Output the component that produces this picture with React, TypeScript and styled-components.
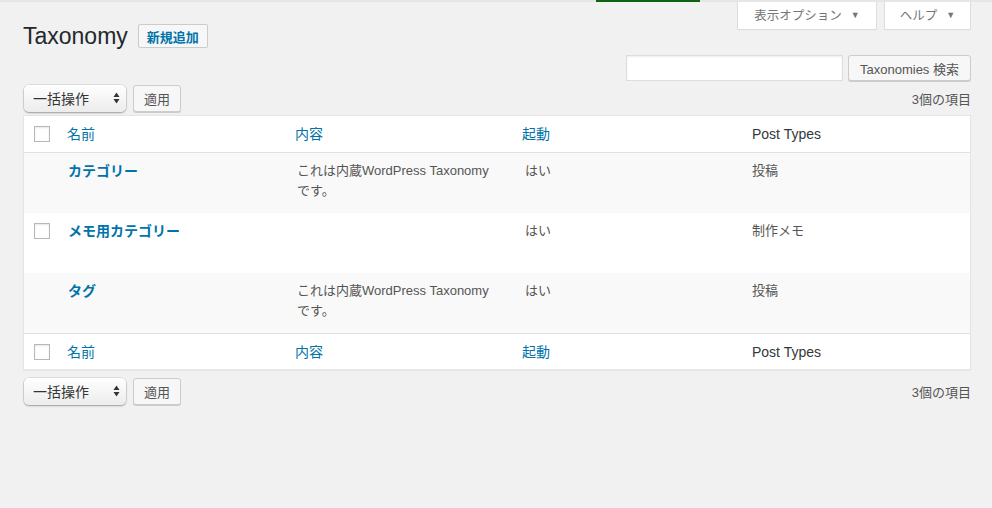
import styled, { createGlobalStyle } from "styled-components";

const GlobalStyle = createGlobalStyle`
  html, body {
    margin: 0;
    padding: 0;
    background: #f1f1f1;
    font-family: "Liberation Sans", "Noto Sans CJK JP", sans-serif;
    font-size: 13px;
    color: #555;
  }
`

const TopStrip = styled.div`
  position: fixed;
  top: 0;
  left: 0;
  right: 0;
  height: 2px;
  display: flex;
  background: #e6e6e6;
`

const Progress = styled.span`
  margin-left: 596px;
  width: 104px;
  background: #0b640f;
`

const Page = styled.div`
  padding: 0 21px 40px 23px;
  min-height: 100vh;
  box-sizing: border-box;
`

const TopBar = styled.div`
  display: flex;
  justify-content: space-between;
  align-items: flex-start;
  height: 50px;
`

const TitleWrap = styled.div`
  display: flex;
  align-items: center;
  gap: 10px;
  margin-top: 24px;
`

const Title = styled.h1`
  margin: 0;
  font-size: 23px;
  font-weight: 400;
  line-height: 24px;
  color: #23282d;
`

const AddNew = styled.button`
  height: 24px;
  padding: 0 8px;
  border: 1px solid #ccc;
  border-radius: 2px;
  background: #f7f7f7;
  color: #0073aa;
  font-family: inherit;
  font-size: 13px;
  font-weight: 700;
`

const MetaTabs = styled.div`
  display: flex;
  gap: 7px;
`

const MetaTab = styled.button<{ $w: number }>`
  width: ${p => p.$w}px;
  height: 30px;
  background: #fff;
  border: 1px solid #ddd;
  border-top: none;
  box-shadow: 0 1px 1px -1px rgba(0, 0, 0, 0.1);
  color: #72777c;
  font-family: inherit;
  font-size: 12.5px;
  display: flex;
  align-items: center;
  justify-content: center;
  gap: 9px;
`

const Caret = styled.span`
  font-size: 9px;
  color: #72777c;
`

const SearchRow = styled.div`
  display: flex;
  justify-content: flex-end;
  gap: 5px;
  margin-top: 5px;
  height: 26px;
`

const SearchInput = styled.input`
  width: 217px;
  height: 26px;
  box-sizing: border-box;
  border: 1px solid #ddd;
  box-shadow: inset 0 1px 2px rgba(0, 0, 0, 0.07);
  background: #fff;
  margin: 0;
`

const Button = styled.button<{ $w?: number; $h?: number }>`
  width: ${p => (p.$w ? `${p.$w}px` : "auto")};
  height: ${p => p.$h ?? 26}px;
  box-sizing: border-box;
  padding: 0 8px;
  background: #f7f7f7;
  border: 1px solid #ccc;
  border-radius: 3px;
  box-shadow: 0 1px 0 #ccc;
  color: #555;
  font-family: inherit;
  font-size: 13px;
  margin: 0;
`

const TableNav = styled.div<{ $top: number; $bottom: number }>`
  display: flex;
  justify-content: space-between;
  align-items: center;
  margin: ${p => p.$top}px 0 ${p => p.$bottom}px;
  height: 28px;
`

const Actions = styled.div`
  display: flex;
  align-items: center;
  gap: 7px;
  padding-left: 1px;
`

const Select = styled.div`
  width: 102px;
  height: 27px;
  box-sizing: border-box;
  display: flex;
  align-items: center;
  justify-content: space-between;
  padding: 0 6px 0 9px;
  border-radius: 5px;
  background: linear-gradient(#ffffff, #ececec);
  box-shadow: 0 0 0 0.5px rgba(0, 0, 0, 0.15), 0 1px 2px rgba(0, 0, 0, 0.3);
  font-size: 14px;
  color: #333;
`

const Count = styled.span`
  font-size: 13px;
  color: #555;
`

const Table = styled.table`
  width: 100%;
  border-spacing: 0;
  border: 1px solid #e5e5e5;
  background: #fff;
  box-shadow: 0 1px 1px rgba(0, 0, 0, 0.04);
  table-layout: fixed;
`

const Th = styled.th<{ $w?: number; $link?: boolean; $foot?: boolean }>`
  width: ${p => (p.$w ? `${p.$w}px` : "auto")};
  box-sizing: border-box;
  text-align: left;
  font-weight: 400;
  font-size: 14px;
  line-height: 20px;
  padding: ${p => (p.$foot ? "8px 10px 7px" : "8px 10px")};
  color: ${p => (p.$link ? "#0073aa" : "#32373c")};
  border-bottom: ${p => (p.$foot ? "none" : "1px solid #e1e1e1")};
  border-top: ${p => (p.$foot ? "1px solid #e1e1e1" : "none")};
`

const CheckCell = styled.td`
  padding: 10px 0 0 10px;
  vertical-align: top;
`

const HeadCheck = styled.th<{ $foot?: boolean }>`
  width: 33px;
  padding: 0 0 0 10px;
  box-sizing: border-box;
  vertical-align: middle;
  border-bottom: ${p => (p.$foot ? "none" : "1px solid #e1e1e1")};
  border-top: ${p => (p.$foot ? "1px solid #e1e1e1" : "none")};
`

const Checkbox = styled.span`
  display: block;
  width: 16px;
  height: 16px;
  box-sizing: border-box;
  border: 1px solid #b4b9be;
  background: #fff;
  box-shadow: inset 0 1px 2px rgba(0, 0, 0, 0.1);
`

const Row = styled.tr<{ $alt: boolean }>`
  background: ${p => (p.$alt ? "#f9f9f9" : "#fff")};
  height: 60px;
`

const Td = styled.td`
  vertical-align: top;
  padding: 8px 10px 12px;
  font-size: 13px;
  line-height: 20px;
  color: #555;
`

const NameLink = styled.a`
  font-size: 14px;
  font-weight: 700;
  color: #0073aa;
  text-decoration: none;
  padding-left: 1px;
`

const Desc = styled.span`
  display: block;
  max-width: 197px;
  padding-left: 2px;
`

const Plain = styled.span`
  padding-left: 3px;
`

type Term = { name: string; desc: string; active: string; types: string; checkable: boolean }

const terms: Term[] = [
  { name: "カテゴリー", desc: "これは内蔵WordPress Taxonomyです。", active: "はい", types: "投稿", checkable: false },
  { name: "メモ用カテゴリー", desc: "", active: "はい", types: "制作メモ", checkable: true },
  { name: "タグ", desc: "これは内蔵WordPress Taxonomyです。", active: "はい", types: "投稿", checkable: false },
]

function Arrows() {
  return (
    <svg width="7" height="12" viewBox="0 0 7 12">
      <path d="M3.5 0.5 L6.5 5 L0.5 5 Z" fill="#333" />
      <path d="M3.5 11.5 L6.5 7 L0.5 7 Z" fill="#333" />
    </svg>
  )
}

function HeadRow({ foot }: { foot?: boolean }) {
  return (
    <tr>
      <HeadCheck $foot={foot}><Checkbox /></HeadCheck>
      <Th $w={228} $link $foot={foot}>名前</Th>
      <Th $w={227} $link $foot={foot}>内容</Th>
      <Th $w={230} $link $foot={foot}>起動</Th>
      <Th $foot={foot}>Post Types</Th>
    </tr>
  )
}

function Nav({ top, bottom }: { top: number; bottom: number }) {
  return (
    <TableNav $top={top} $bottom={bottom}>
      <Actions>
        <Select>
          <span>一括操作</span>
          <Arrows />
        </Select>
        <Button $w={48} $h={27}>適用</Button>
      </Actions>
      <Count>3個の項目</Count>
    </TableNav>
  )
}

export default function App() {
  return (
    <>
      <GlobalStyle />
      <TopStrip><Progress /></TopStrip>
      <Page>
        <TopBar>
          <TitleWrap>
            <Title>Taxonomy</Title>
            <AddNew>新規追加</AddNew>
          </TitleWrap>
          <MetaTabs>
            <MetaTab $w={140}>表示オプション <Caret>▼</Caret></MetaTab>
            <MetaTab $w={87}>ヘルプ <Caret>▼</Caret></MetaTab>
          </MetaTabs>
        </TopBar>
        <SearchRow>
          <SearchInput />
          <Button $w={123}>Taxonomies 検索</Button>
        </SearchRow>
        <Nav top={3} bottom={3} />
        <Table>
          <thead>
            <HeadRow />
          </thead>
          <tbody>
            {terms.map((t, i) => (
              <Row key={t.name} $alt={i % 2 === 0}>
                <CheckCell>{t.checkable && <Checkbox />}</CheckCell>
                <Td><NameLink href="#">{t.name}</NameLink></Td>
                <Td><Desc>{t.desc}</Desc></Td>
                <Td><Plain>{t.active}</Plain></Td>
                <Td>{t.types}</Td>
              </Row>
            ))}
          </tbody>
          <tfoot>
            <HeadRow foot />
          </tfoot>
        </Table>
        <Nav top={7} bottom={0} />
      </Page>
    </>
  )
}
